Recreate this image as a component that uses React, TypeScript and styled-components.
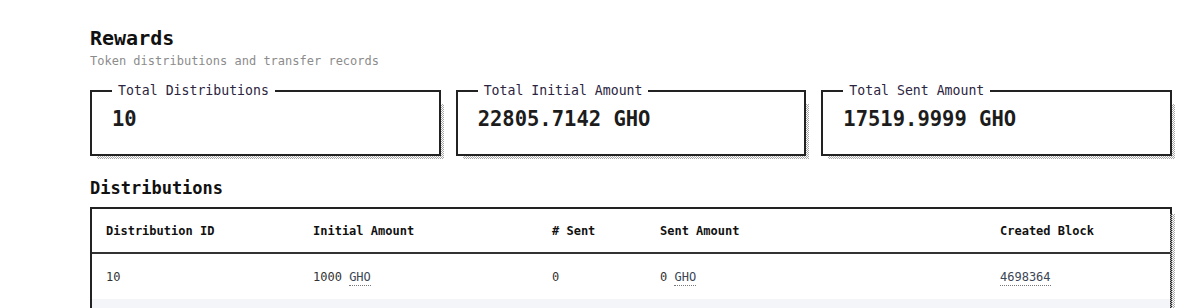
import React from "react";
import styled, { createGlobalStyle } from "styled-components";

const GlobalStyle = createGlobalStyle`
  html, body {
    margin: 0;
    padding: 0;
    background: #fff;
    font-family: "DejaVu Sans Mono", "Liberation Mono", monospace;
    color: #222;
  }
`;

const shadow = `
  content: "";
  position: absolute;
  left: 5px;
  top: 5px;
  right: -5px;
  bottom: -5px;
  z-index: -1;
  background: repeating-conic-gradient(#a8a8a8 0 25%, transparent 0 50%) 0 0 / 2px 2px;
`;

const Page = styled.div`
  padding: 26px 0 0 90px;
  width: 1082px;
`;

const Title = styled.h1`
  margin: 0;
  font-size: 20px;
  line-height: 24px;
  font-weight: bold;
  color: #111;
`;

const Subtitle = styled.p`
  margin: 3px 0 0;
  font-size: 12px;
  line-height: 16px;
  color: #8c8c8c;
`;

const Stats = styled.div`
  display: grid;
  grid-template-columns: repeat(3, 1fr);
  gap: 15px;
  margin-top: 14px;
  position: relative;
  z-index: 0;
`;

const Card = styled.fieldset`
  position: relative;
  margin: 0;
  padding: 6px 20px 0;
  height: 63px;
  border: 2px solid #222;
  background: #fff;
  min-width: 0;
  &::after {
    ${shadow}
  }
`;

const Label = styled.legend`
  padding: 0 6px;
  font-size: 13.2px;
  line-height: 16px;
  color: #2c2540;
`;

const Value = styled.div`
  font-size: 20.5px;
  line-height: 28px;
  font-weight: bold;
  color: #1c1c1c;
`;

const SectionTitle = styled.h2`
  margin: 21px 0 0;
  font-size: 17px;
  line-height: 22px;
  font-weight: bold;
  color: #111;
`;

const TableWrap = styled.div`
  position: relative;
  z-index: 0;
  margin-top: 8px;
  border: 2px solid #222;
  border-bottom: none;
  &::after {
    ${shadow}
  }
`;

const Table = styled.table`
  width: 100%;
  border-collapse: collapse;
  table-layout: fixed;
  font-size: 12px;
  background: #fff;
`;

const Th = styled.th<{ $w?: number }>`
  box-sizing: border-box;
  width: ${(p) => (p.$w ? `${p.$w}px` : "auto")};
  text-align: left;
  padding: 0 14px;
  height: 44px;
  font-weight: bold;
  color: #111;
  border-bottom: 2px solid #333;
`;

const Row = styled.tr<{ $alt?: boolean }>`
  background: ${(p) => (p.$alt ? "#f3f5f8" : "#fff")};
`;

const Td = styled.td`
  padding: 0 14px;
  height: 45px;
  color: #333;
`;

const Dotted = styled.span`
  color: #3b4656;
  border-bottom: 1px dotted #777;
  padding-bottom: 1px;
`;

const stats = [
  { label: "Total Distributions", value: "10" },
  { label: "Total Initial Amount", value: "22805.7142 GHO" },
  { label: "Total Sent Amount", value: "17519.9999 GHO" },
];

const columns: [string, number | undefined][] = [
  ["Distribution ID", 207],
  ["Initial Amount", 239],
  ["# Sent", 108],
  ["Sent Amount", 340],
  ["Created Block", undefined],
];

const rows = [
  { id: "10", initial: "1000", sent: "0", amount: "0", block: "4698364" },
  { id: "9", initial: "1000", sent: "0", amount: "0", block: "4698360" },
];

export default function App() {
  return (
    <>
      <GlobalStyle />
      <Page>
        <Title>Rewards</Title>
        <Subtitle>Token distributions and transfer records</Subtitle>
        <Stats>
          {stats.map((s) => (
            <Card key={s.label}>
              <Label>{s.label}</Label>
              <Value>{s.value}</Value>
            </Card>
          ))}
        </Stats>
        <SectionTitle>Distributions</SectionTitle>
        <TableWrap>
          <Table>
            <thead>
              <tr>
                {columns.map(([name, w]) => (
                  <Th key={name} $w={w}>
                    {name}
                  </Th>
                ))}
              </tr>
            </thead>
            <tbody>
              {rows.map((r, i) => (
                <Row key={r.id} $alt={i % 2 === 1}>
                  <Td>{r.id}</Td>
                  <Td>
                    {r.initial} <Dotted>GHO</Dotted>
                  </Td>
                  <Td>{r.sent}</Td>
                  <Td>
                    {r.amount} <Dotted>GHO</Dotted>
                  </Td>
                  <Td>
                    <Dotted>{r.block}</Dotted>
                  </Td>
                </Row>
              ))}
            </tbody>
          </Table>
        </TableWrap>
      </Page>
    </>
  );
}
